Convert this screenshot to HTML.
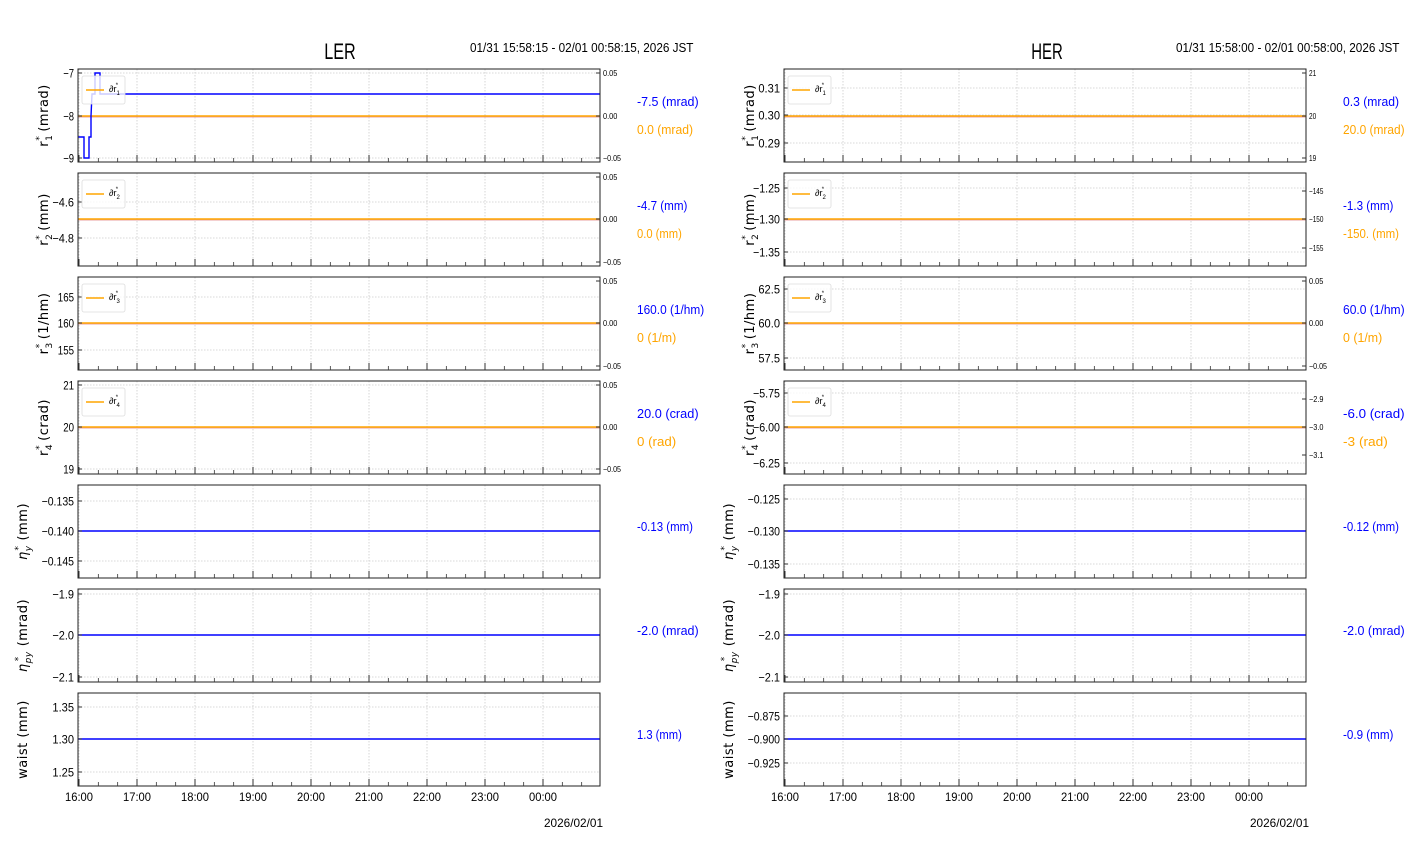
<!DOCTYPE html>
<html><head><meta charset="utf-8"><style>
html,body{margin:0;padding:0;background:#fff;}
svg{display:block;font-family:"Liberation Sans",sans-serif;}
</style></head><body>
<svg id="s" width="1412" height="864" xmlns="http://www.w3.org/2000/svg"></svg>
<script>
var S=document.getElementById('s'),o='';
function T(x,y,t,sz,col,anch,cw,extra){
  var len=t.length*cw;
  o+='<text x="'+x+'" y="'+y+'" font-size="'+sz+'" fill="'+(col||'#000')+'" text-anchor="'+(anch||'start')+'" textLength="'+len+'" lengthAdjust="spacingAndGlyphs" '+(extra||'')+'>'+t+'</text>';
}
function L(x1,y1,x2,y2,c,w,extra){o+='<line x1="'+x1+'" y1="'+y1+'" x2="'+x2+'" y2="'+y2+'" stroke="'+c+'" stroke-width="'+w+'" '+(extra||'')+'/>';}
var tops=[69,173,277,381,485,589,693],H=93;
var hours=['16:00','17:00','18:00','19:00','20:00','21:00','22:00','23:00','00:00'];
var sides=[
 {x0:78,title:'LER',tx:340,range:'01/31 15:58:15 - 02/01 00:58:15, 2026 JST',rx:470,vx:637,
  p:[
   {yt:[['−7',73],['−8',116],['−9',158]],rt:[['0.05',73],['0.00',116],['−0.05',158]],line:94,orange:116,lab:'r',sub:'1',unit:'(mrad)',v1:'-7.5 (mrad)',v2:'0.0 (mrad)',step:true},
   {yt:[['−4.6',202],['−4.8',238]],rt:[['0.05',177],['0.00',219],['−0.05',262]],line:219,orange:219,lab:'r',sub:'2',unit:'(mm)',v1:'-4.7 (mm)',v2:'0.0 (mm)'},
   {yt:[['165',297],['160',323],['155',350]],rt:[['0.05',281],['0.00',323],['−0.05',366]],line:323,orange:323,lab:'r',sub:'3',unit:'(1/hm)',v1:'160.0 (1/hm)',v2:'0 (1/m)'},
   {yt:[['21',385],['20',427],['19',469]],rt:[['0.05',385],['0.00',427],['−0.05',469]],line:427,orange:427,lab:'r',sub:'4',unit:'(crad)',v1:'20.0 (crad)',v2:'0 (rad)'},
   {yt:[['−0.135',501],['−0.140',531],['−0.145',561]],line:531,lab:'eta',sub:'y',unit:'(mm)',v1:'-0.13 (mm)'},
   {yt:[['−1.9',594],['−2.0',635],['−2.1',677]],line:635,lab:'eta',sub:'py',unit:'(mrad)',v1:'-2.0 (mrad)'},
   {yt:[['1.35',707],['1.30',739],['1.25',772]],line:739,lab:'waist',unit:'(mm)',v1:'1.3 (mm)'}
  ]},
 {x0:784,title:'HER',tx:1047,range:'01/31 15:58:00 - 02/01 00:58:00, 2026 JST',rx:1176,vx:1343,
  p:[
   {yt:[['0.31',88],['0.30',115],['0.29',143]],rt:[['21',73],['20',116],['19',158]],line:116,orange:116,lab:'r',sub:'1',unit:'(mrad)',v1:'0.3 (mrad)',v2:'20.0 (mrad)'},
   {yt:[['−1.25',188],['−1.30',219],['−1.35',252]],rt:[['−145',191],['−150',219],['−155',248]],line:219,orange:219,lab:'r',sub:'2',unit:'(mm)',v1:'-1.3 (mm)',v2:'-150. (mm)'},
   {yt:[['62.5',289],['60.0',323],['57.5',358]],rt:[['0.05',281],['0.00',323],['−0.05',366]],line:323,orange:323,lab:'r',sub:'3',unit:'(1/hm)',v1:'60.0 (1/hm)',v2:'0 (1/m)'},
   {yt:[['−5.75',393],['−6.00',427],['−6.25',463]],rt:[['−2.9',399],['−3.0',427],['−3.1',455]],line:427,orange:427,lab:'r',sub:'4',unit:'(crad)',v1:'-6.0 (crad)',v2:'-3 (rad)'},
   {yt:[['−0.125',499],['−0.130',531],['−0.135',564]],line:531,lab:'eta',sub:'y',unit:'(mm)',v1:'-0.12 (mm)'},
   {yt:[['−1.9',594],['−2.0',635],['−2.1',677]],line:635,lab:'eta',sub:'py',unit:'(mrad)',v1:'-2.0 (mrad)'},
   {yt:[['−0.875',716],['−0.900',739],['−0.925',763]],line:739,lab:'waist',unit:'(mm)',v1:'-0.9 (mm)'}
  ]}
];
sides.forEach(function(sd){
  var x0=sd.x0,x1=x0+522;
  T(sd.tx,59,sd.title,22,'#000','middle',10.5);
  T(sd.rx,52,sd.range,13,'#000','start',5.45);
  sd.p.forEach(function(p,i){
    var t=tops[i],b=t+H;
    for(var h=0;h<9;h++){var gx=x0+1+h*58;L(gx,t,gx,b,'#ccc',0.8,'stroke-dasharray="1.5,1.5"');}
    p.yt.forEach(function(y){L(x0,y[1],x1,y[1],'#ccc',0.8,'stroke-dasharray="1.5,1.5"');});
    if(p.orange){L(x0,p.orange+0.8,x1,p.orange+0.8,'#e9a0a0',1.5);L(x0,p.orange,x1,p.orange,'orange',1.4);}
    if(p.step){
      o+='<polyline fill="none" stroke="#0000ff" stroke-width="1.4" points="'+x0+',137 84,137 84,158 89,158 89,137 91,137 91,116 92,94 95,94 95,73 100,73 100,94 '+x1+',94"/>';
    }
    if(i>=4)L(x0,p.line,x1,p.line,'#0000ff',1.6);
    o+='<rect x="'+x0+'" y="'+t+'" width="522" height="'+H+'" fill="none" stroke="#222" stroke-width="1"/>';
    for(var m=0;m<=26;m++){var tx=x0+1+m*58/3;if(tx>x1)break;var big=(m%3==0);L(tx,b,tx,b-(big?7:4),'#333',big?1:0.8);}
    p.yt.forEach(function(y){L(x0,y[1],x0+4,y[1],'#333',1);T(x0-4,y[1]+4.5,y[0],12,'#000','end',5.4);});
    if(p.rt){p.rt.forEach(function(y){L(x1-4,y[1],x1,y[1],'#333',1);T(x1+3,y[1]+3,y[0],8,'#000','start',3.6);});}
    if(p.lab=='r'){
      o+='<rect x="'+(x0+4)+'" y="'+(t+7)+'" width="43" height="28" rx="2" fill="#fff" fill-opacity="0.8" stroke="#ddd" stroke-width="0.8"/>';
      L(x0+8,t+21,x0+26,t+21,'orange',1.5);
      o+='<text x="'+(x0+31)+'" y="'+(t+23)+'" font-size="9" fill="#000">∂r<tspan font-size="6" dy="3">'+p.sub+'</tspan><tspan font-size="6" dx="-4" dy="-8">*</tspan></text>';
    }
    var cy=t+H/2, lx=(i>=4)?x0-51:x0-30;
    if(p.lab=='r'){
      o+='<text transform="translate('+lx+','+cy+') rotate(-90)" text-anchor="middle" font-size="13" font-family="DejaVu Sans,sans-serif" fill="#000" letter-spacing="0.5">r<tspan font-size="9" dy="4">'+p.sub+'</tspan><tspan font-size="9" dx="-6" dy="-10">*</tspan><tspan dy="6" dx="4">'+p.unit+'</tspan></text>';
    } else if(p.lab=='eta'){
      o+='<text transform="translate('+lx+','+cy+') rotate(-90)" text-anchor="middle" font-size="13" font-family="DejaVu Sans,sans-serif" fill="#000" letter-spacing="0.5"><tspan font-style="italic">η</tspan><tspan font-size="9" font-style="italic" dy="4">'+p.sub+'</tspan><tspan font-size="9" dx="-'+(p.sub.length*5)+'" dy="-10">*</tspan><tspan dy="6" dx="'+(p.sub.length*5)+'">'+p.unit+'</tspan></text>';
    } else {
      o+='<text transform="translate('+lx+','+cy+') rotate(-90)" text-anchor="middle" font-size="13" font-family="DejaVu Sans,sans-serif" fill="#000" letter-spacing="0.5">waist (mm)</text>';
    }
    if(p.v2){T(sd.vx,t+37,p.v1,13,'#0000ff','start',5.6);T(sd.vx,t+65,p.v2,13,'orange','start',5.6);}
    else T(sd.vx,t+46,p.v1,13,'#0000ff','start',5.6);
  });
  for(var h=0;h<9;h++){T(x0+1+h*58,801,hours[h],12,'#000','middle',5.6);}
  T(x1-56,827,'2026/02/01',12,'#000','start',5.9);
});
S.innerHTML=o;
</script>
</body></html>
